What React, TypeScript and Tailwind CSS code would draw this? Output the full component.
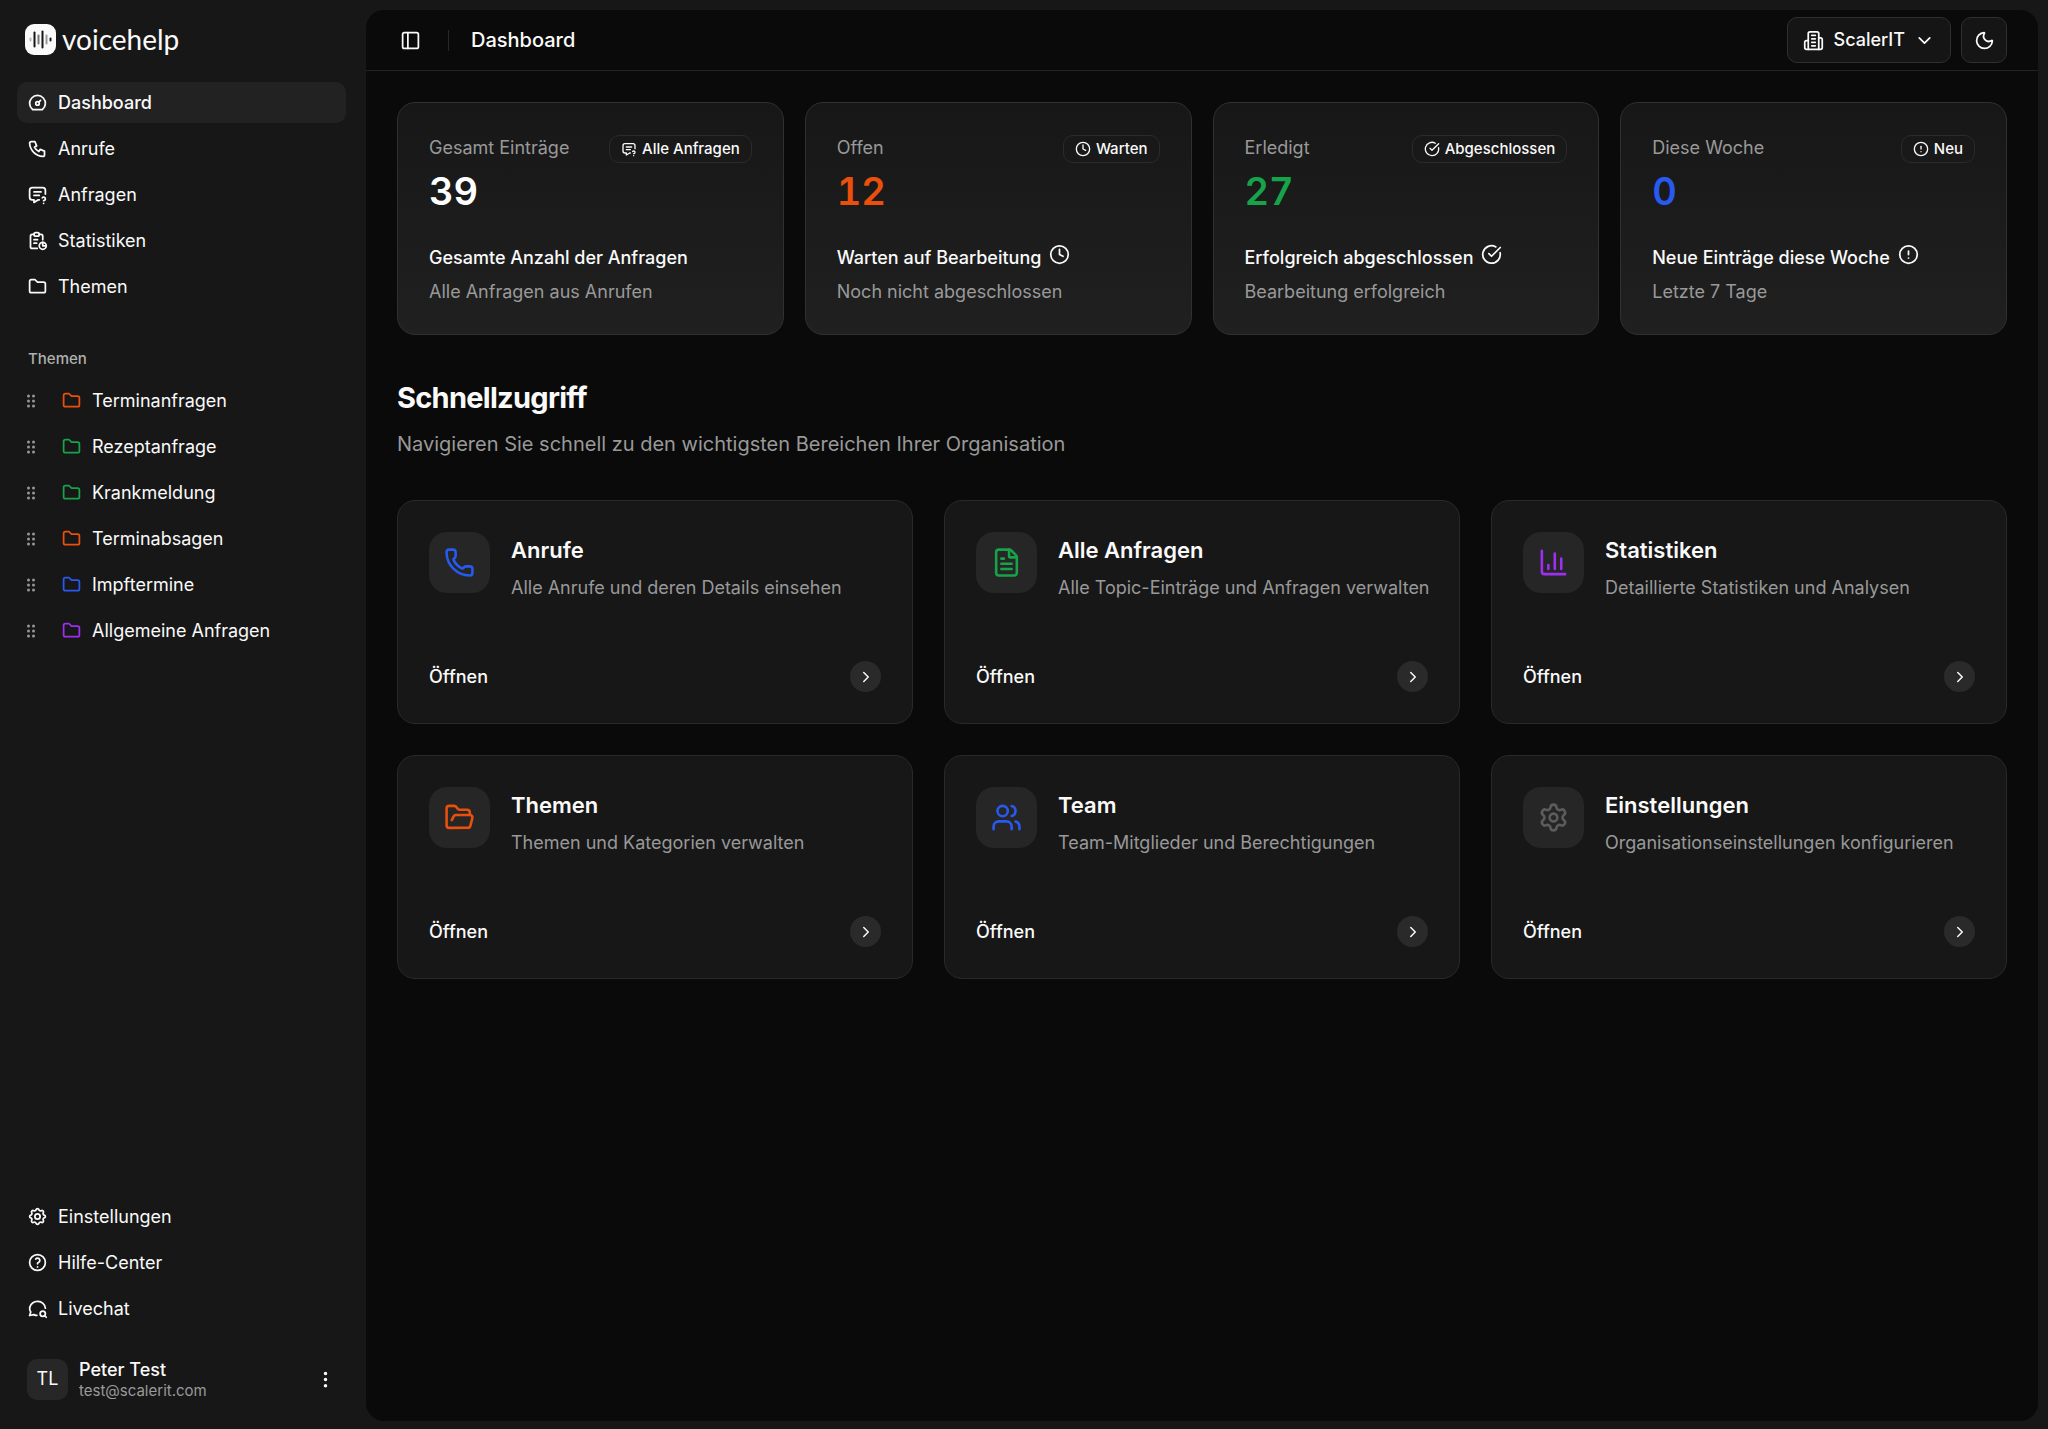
import type { ComponentType, SVGProps } from "react";
import {
  ChartColumn,
  ChevronDown,
  ChevronRight,
  CircleAlert,
  CircleCheckBig,
  Clock,
  FileText,
  FolderOpen,
  Moon,
  PanelLeft,
  Phone,
  Settings,
  Users,
} from "lucide-react";
import {
  TbDashboard,
  TbDotsVertical,
  TbFolder,
  TbHelp,
  TbMessageCircleSearch,
  TbMessageQuestion,
  TbPhone,
  TbReport,
  TbSettings,
} from "react-icons/tb";

type Icon = ComponentType<{ className?: string }>;

const mainNav: { label: string; icon: Icon }[] = [
  { label: "Dashboard", icon: TbDashboard },
  { label: "Anrufe", icon: TbPhone },
  { label: "Anfragen", icon: TbMessageQuestion },
  { label: "Statistiken", icon: TbReport },
  { label: "Themen", icon: TbFolder },
];

const topics = [
  { label: "Terminanfragen", color: "text-[#ea500c]" },
  { label: "Rezeptanfrage", color: "text-[#16a34a]" },
  { label: "Krankmeldung", color: "text-[#16a34a]" },
  { label: "Terminabsagen", color: "text-[#ea500c]" },
  { label: "Impftermine", color: "text-[#2859f0]" },
  { label: "Allgemeine Anfragen", color: "text-[#9c2ff0]" },
];

const footerNav: { label: string; icon: Icon }[] = [
  { label: "Einstellungen", icon: TbSettings },
  { label: "Hilfe-Center", icon: TbHelp },
  { label: "Livechat", icon: TbMessageCircleSearch },
];

const stats: {
  label: string;
  value: string;
  color: string;
  badge: string;
  badgeIcon: Icon;
  title: string;
  titleIcon?: Icon;
  note: string;
}[] = [
  {
    label: "Gesamt Einträge",
    value: "39",
    color: "text-white",
    badge: "Alle Anfragen",
    badgeIcon: TbMessageQuestion,
    title: "Gesamte Anzahl der Anfragen",
    note: "Alle Anfragen aus Anrufen",
  },
  {
    label: "Offen",
    value: "12",
    color: "text-[#ea500c]",
    badge: "Warten",
    badgeIcon: Clock,
    title: "Warten auf Bearbeitung",
    titleIcon: Clock,
    note: "Noch nicht abgeschlossen",
  },
  {
    label: "Erledigt",
    value: "27",
    color: "text-[#16a34a]",
    badge: "Abgeschlossen",
    badgeIcon: CircleCheckBig,
    title: "Erfolgreich abgeschlossen",
    titleIcon: CircleCheckBig,
    note: "Bearbeitung erfolgreich",
  },
  {
    label: "Diese Woche",
    value: "0",
    color: "text-[#2859f0]",
    badge: "Neu",
    badgeIcon: CircleAlert,
    title: "Neue Einträge diese Woche",
    titleIcon: CircleAlert,
    note: "Letzte 7 Tage",
  },
];

const shortcuts: { title: string; text: string; icon: Icon; color: string }[] = [
  { title: "Anrufe", text: "Alle Anrufe und deren Details einsehen", icon: Phone, color: "text-[#2859f0]" },
  { title: "Alle Anfragen", text: "Alle Topic-Einträge und Anfragen verwalten", icon: FileText, color: "text-[#16a34a]" },
  { title: "Statistiken", text: "Detaillierte Statistiken und Analysen", icon: ChartColumn, color: "text-[#9c2ff0]" },
  { title: "Themen", text: "Themen und Kategorien verwalten", icon: FolderOpen, color: "text-[#ea500c]" },
  { title: "Team", text: "Team-Mitglieder und Berechtigungen", icon: Users, color: "text-[#2859f0]" },
  { title: "Einstellungen", text: "Organisationseinstellungen konfigurieren", icon: Settings, color: "text-[#5c5c5c]" },
];

function LogoMark() {
  return (
    <svg viewBox="0 0 31 31" className="size-[31px]" aria-hidden="true">
      <rect width="31" height="31" rx="9" fill="#fafafa" />
      <g strokeLinecap="round" strokeWidth="2" fill="none">
        <path d="M5.5 14.5v2" stroke="#b5b5b5" />
        <path d="M9.5 8.5v14" stroke="#171717" />
        <path d="M13.5 11.5v8" stroke="#777" />
        <path d="M17.5 7.5v16" stroke="#171717" />
        <path d="M21.5 11.5v8" stroke="#999" />
        <path d="M25.5 14.5v2" stroke="#171717" />
      </g>
    </svg>
  );
}

function Building(props: SVGProps<SVGSVGElement>) {
  return (
    <svg viewBox="0 0 24 24" fill="none" stroke="currentColor" strokeWidth="2" strokeLinecap="round" strokeLinejoin="round" aria-hidden="true" {...props}>
      <path d="M6 22V4a2 2 0 0 1 2-2h8a2 2 0 0 1 2 2v18Z" />
      <path d="M6 12H4a2 2 0 0 0-2 2v6a2 2 0 0 0 2 2h2" />
      <path d="M18 9h2a2 2 0 0 1 2 2v9a2 2 0 0 1-2 2h-2" />
      <path d="M10 6h4M10 10h4M10 14h4M10 18h4" />
    </svg>
  );
}

function Grip() {
  return (
    <svg viewBox="0 0 10 16" className="h-4 w-[10px]" fill="#969696" aria-hidden="true">
      {[3, 8, 13].map((y) => (
        <g key={y}>
          <circle cx="2.5" cy={y} r="1.5" />
          <circle cx="7.5" cy={y} r="1.5" />
        </g>
      ))}
    </svg>
  );
}

function NavLink({ label, icon: I, active = false }: { label: string; icon: Icon; active?: boolean }) {
  return (
    <a
      href="#"
      aria-current={active ? "page" : undefined}
      className={`flex h-[41px] items-center gap-[10px] rounded-[10px] px-[10px] text-lg ${active ? "bg-[#222222] font-medium" : ""}`}
    >
      <I className="size-[21px] shrink-0" />
      <span>{label}</span>
    </a>
  );
}

function Sidebar() {
  return (
    <aside className="flex w-[366px] shrink-0 flex-col pr-5 pl-[17px]">
      <a href="#" className="mt-6 flex h-[31px] items-center gap-[6px] pl-2">
        <LogoMark />
        <span className="font-[Lato] text-[28px] leading-[29px]">voicehelp</span>
      </a>
      <nav className="mt-[27px] flex flex-col gap-[5px]" aria-label="Hauptnavigation">
        {mainNav.map((n, i) => (
          <NavLink key={n.label} {...n} active={i === 0} />
        ))}
      </nav>
      <h2 className="mt-10 pl-[11px] text-[15px] leading-6 font-medium text-[#b0b0b0]">Themen</h2>
      <ul className="mt-[9px] flex flex-col gap-[5px]">
        {topics.map((t) => (
          <li key={t.label} className="flex h-[41px] items-center pl-[9px]">
            <button type="button" aria-label={`${t.label} verschieben`}>
              <Grip />
            </button>
            <a href="#" className="ml-[25px] flex items-center gap-[10px] text-lg">
              <TbFolder className={`size-[21px] shrink-0 ${t.color}`} />
              {t.label}
            </a>
          </li>
        ))}
      </ul>
      <nav className="mt-auto flex flex-col gap-[5px]" aria-label="Hilfe und Einstellungen">
        {footerNav.map((n) => (
          <NavLink key={n.label} {...n} />
        ))}
      </nav>
      <button type="button" className="mt-[19px] mb-[19px] flex h-[62px] items-center gap-[11px] px-[10px] text-left">
        <span className="flex size-[41px] items-center justify-center rounded-[10px] bg-[#272727] text-lg">TL</span>
        <span className="flex-1">
          <span className="block text-lg leading-[23px] font-medium">Peter Test</span>
          <span className="block text-[15px] leading-5 text-[#9a9a9a]">test@scalerit.com</span>
        </span>
        <TbDotsVertical className="size-[21px]" />
      </button>
    </aside>
  );
}

function Header() {
  return (
    <header className="flex h-[61px] items-center border-b border-[#232323] pr-[31px] pl-[34px]">
      <button type="button" aria-label="Seitenleiste umschalten">
        <PanelLeft className="size-[21px]" />
      </button>
      <span className="ml-[27px] h-[21px] w-px bg-[#282828]" />
      <h1 className="ml-[22px] text-[20px] font-medium">Dashboard</h1>
      <div className="ml-auto flex gap-[10px]">
        <button type="button" aria-haspopup="menu" className="flex h-[46px] items-center rounded-[10px] border border-[#303030] bg-[#151515] px-[15px] text-lg font-medium">
          <Building className="size-[21px]" />
          <span className="mr-[9px] ml-[10px]">ScalerIT</span>
          <ChevronDown className="size-[21px]" />
        </button>
        <button type="button" aria-label="Farbschema wechseln" className="flex size-[46px] items-center justify-center rounded-[10px] border border-[#303030] bg-[#151515]">
          <Moon className="size-[21px]" />
        </button>
      </div>
    </header>
  );
}

export default function App() {
  return (
    <div className="flex min-h-screen bg-[#171717] font-[Inter,sans-serif] text-[#fafafa]">
      <Sidebar />
      <main className="mt-[10px] mr-[10px] mb-2 min-w-0 flex-1 rounded-[18px] bg-[#0a0a0a]">
        <Header />
        <div className="px-[31px] pt-[31px] pb-8">
          <section className="grid grid-cols-4 gap-[21px]" aria-label="Kennzahlen">
            {stats.map(({ badgeIcon: B, titleIcon: T, ...s }) => (
              <article key={s.label} className="rounded-[18px] border border-[#303030] bg-linear-to-b from-[#171717] to-[#202020] px-[31px] pt-8 pb-[29px]">
                <div className="flex items-start justify-between">
                  <p className="text-lg leading-[26px] text-[#999999]">{s.label}</p>
                  <span className="flex h-7 items-center gap-[5px] rounded-[10px] border border-[#2b2b2b] px-[11px] text-[15px] font-medium">
                    <B className="size-4" />
                    {s.badge}
                  </span>
                </div>
                <p className={`mt-[5px] text-[38px] leading-[47px] font-semibold tabular-nums ${s.color}`}>{s.value}</p>
                <p className="mt-[30px] flex h-[26px] items-center gap-2 text-lg leading-[26px] font-medium">
                  {s.title}
                  {T && <T className="mb-2 size-[21px]" />}
                </p>
                <p className="mt-2 text-lg leading-[26px] text-[#999999]">{s.note}</p>
              </article>
            ))}
          </section>

          <h2 className="mt-[42px] text-[29px] leading-[42px] font-bold tracking-tight">Schnellzugriff</h2>
          <p className="mt-[10px] text-[20px] leading-[31px] text-[#999999]">
            Navigieren Sie schnell zu den wichtigsten Bereichen Ihrer Organisation
          </p>

          <section className="mt-10 grid grid-cols-3 gap-[31px]" aria-label="Schnellzugriff">
            {shortcuts.map(({ icon: I, ...s }) => (
              <a key={s.title} href="#" className="block rounded-[18px] border border-[#292929] bg-[#171717] p-[31px]">
                <div className="flex gap-[21px]">
                  <span className="flex size-[61px] shrink-0 items-center justify-center rounded-[18px] bg-[#262626]">
                    <I className={`size-[31px] ${s.color}`} />
                  </span>
                  <div className="pt-[3px]">
                    <h3 className="text-[22px] leading-[31px] font-semibold">{s.title}</h3>
                    <p className="mt-[9px] text-lg leading-[26px] whitespace-nowrap text-[#999999]">{s.text}</p>
                  </div>
                </div>
                <div className="mt-[60px] flex h-[31px] items-center justify-between">
                  <span className="text-lg font-medium">Öffnen</span>
                  <span className="flex size-[31px] items-center justify-center rounded-full bg-[#2a2a2a]">
                    <ChevronRight className="size-[18px]" />
                  </span>
                </div>
              </a>
            ))}
          </section>
        </div>
      </main>
    </div>
  );
}
